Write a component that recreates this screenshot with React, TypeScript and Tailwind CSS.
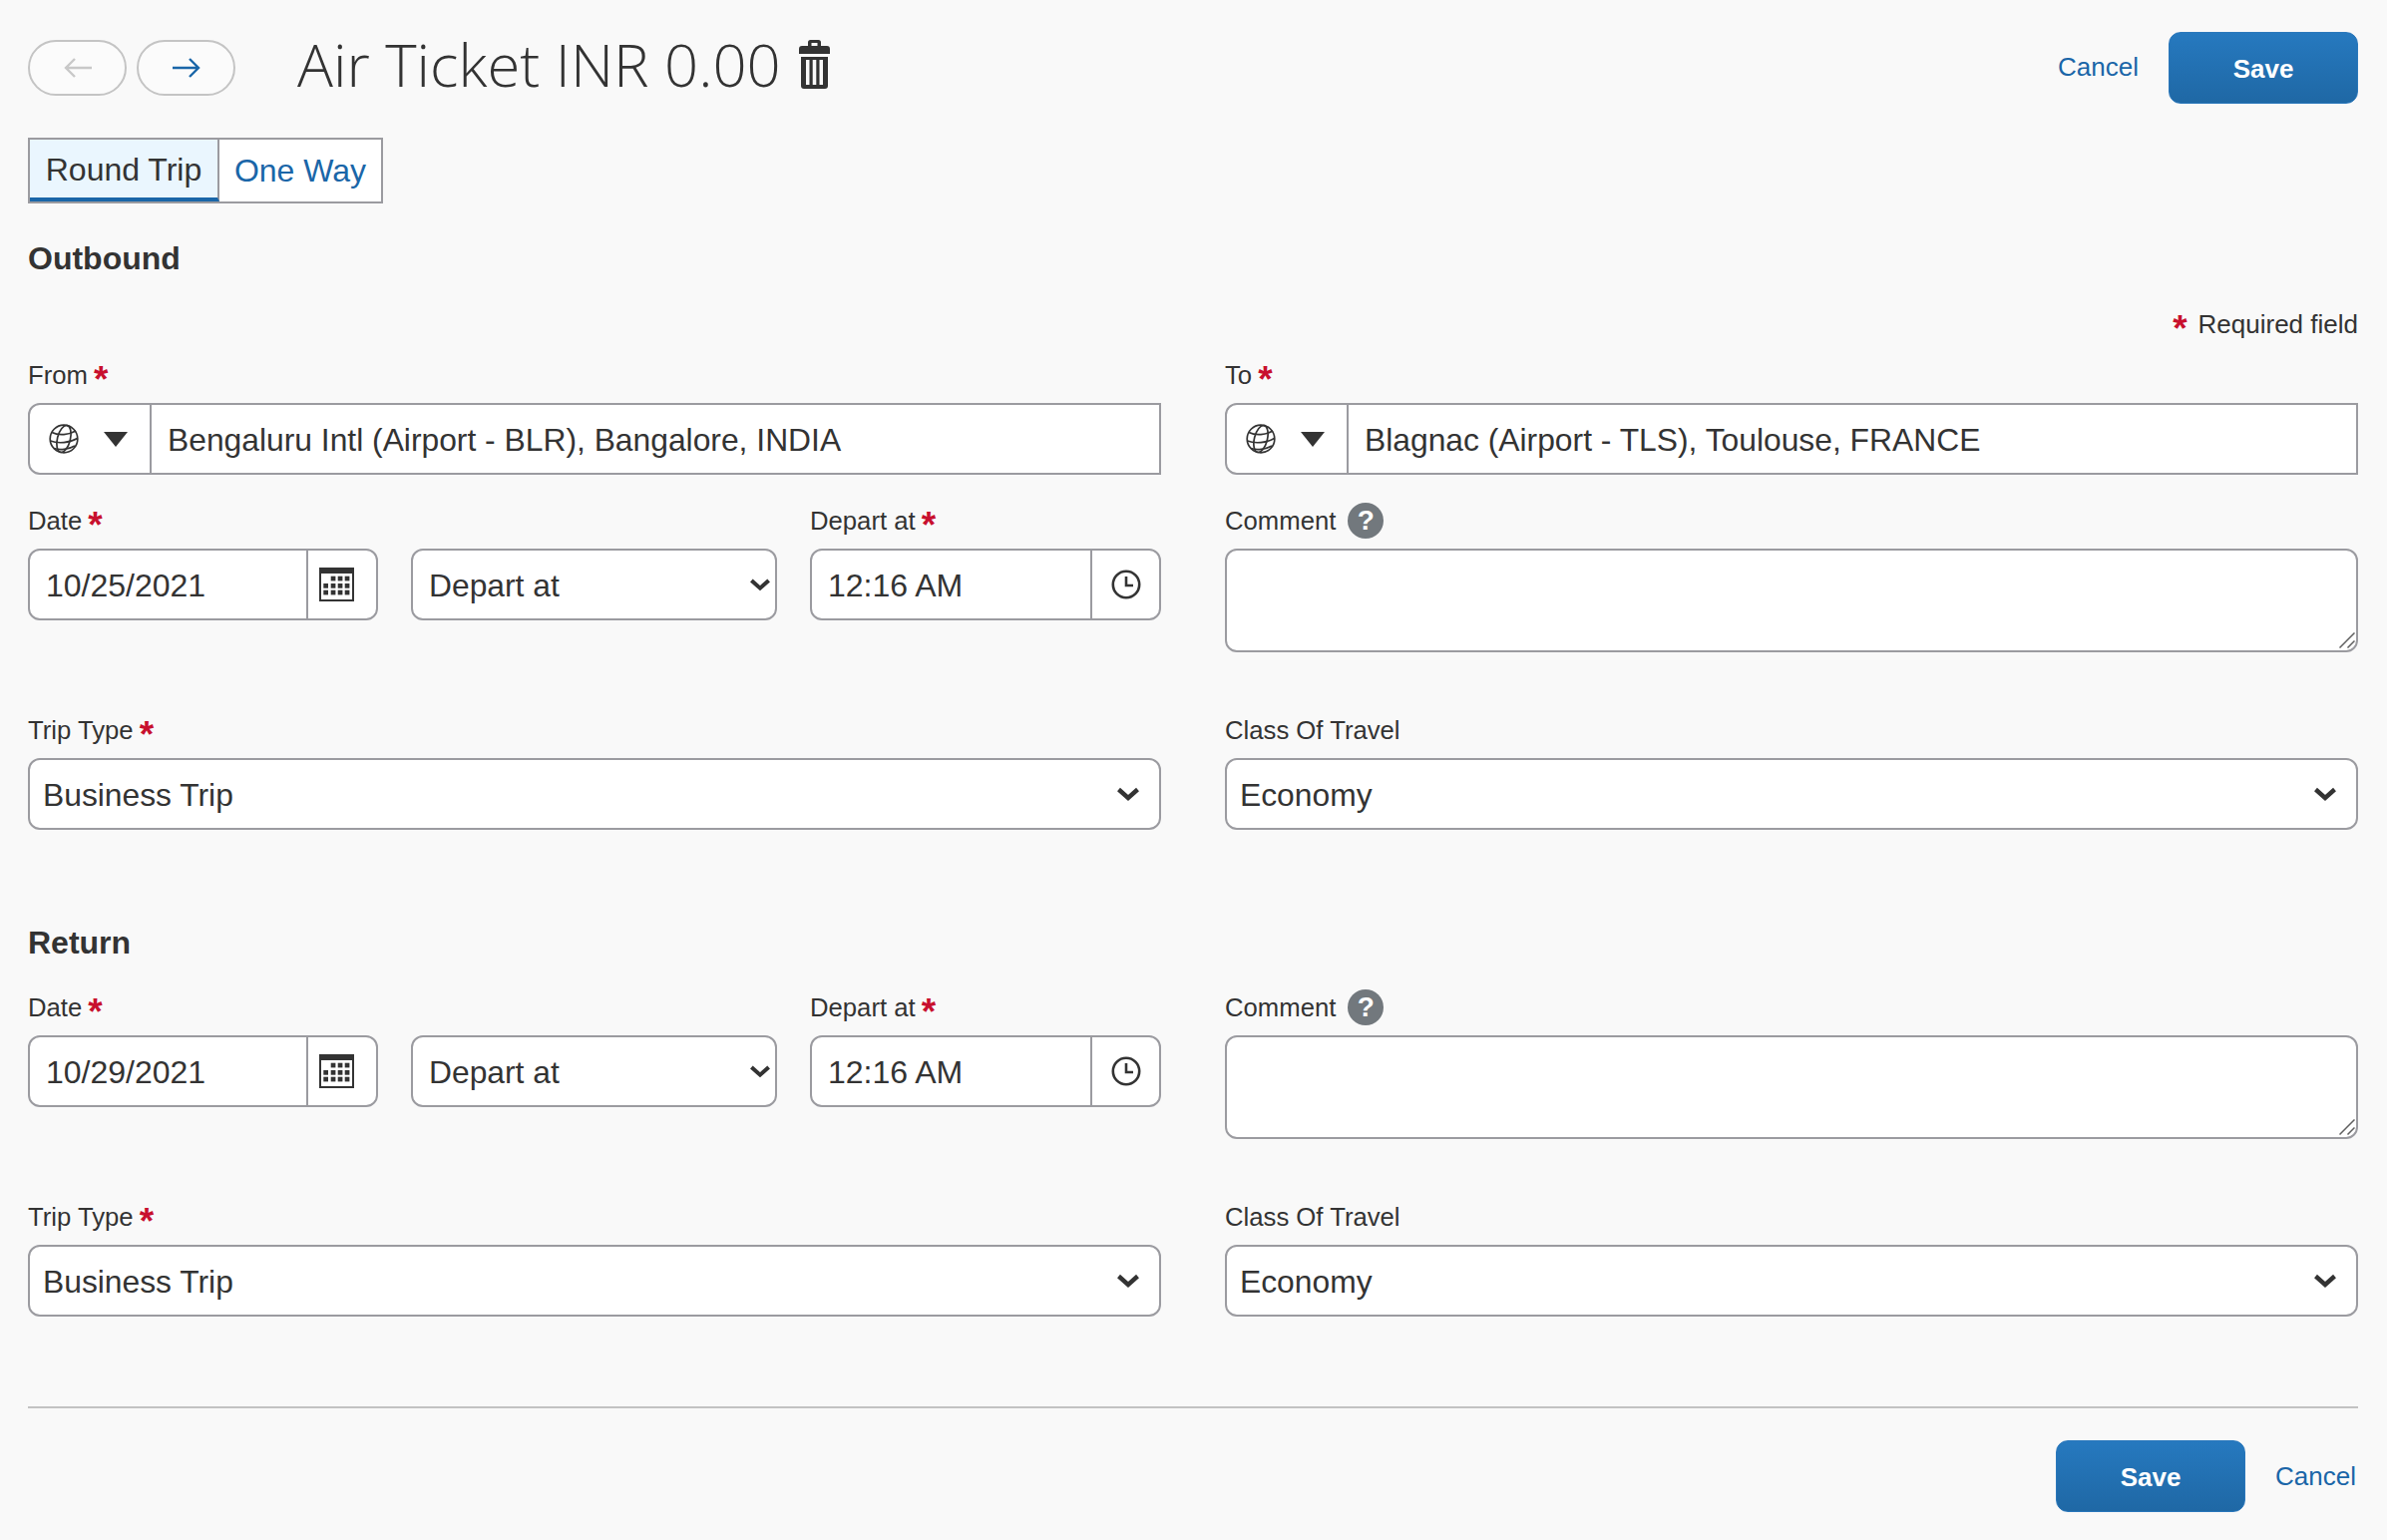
import * as React from 'react';

const FONT = "font-['Liberation_Sans',Arial,sans-serif]";
const BOX = 'border-2 border-[#9b9ba0] bg-white';

const Req = () => (
    <span className="ml-[6px] h-[32px] text-[37px] font-bold leading-[42px] text-[#c8102e]">*</span>
);

const Label: React.FC<{ text: string; required?: boolean; children?: React.ReactNode }> = ({ text, required, children }) => (
    <div className="mb-[12px] flex h-[32px] items-center whitespace-nowrap text-[25.700px] leading-[32px] text-[#333333]">
        <span>{text}</span>
        {required && <Req />}
        {children}
    </div>
);

const Chevron: React.FC<{ small?: boolean }> = ({ small }) => (
    <svg viewBox="0 0 22 14" className={small ? 'h-[13px] w-[20px]' : 'h-[14px] w-[22px]'} fill="none" stroke="#333333" strokeWidth="4.400">
        <path d="M1.500 2.500 L11 11 L20.500 2.500" />
    </svg>
);

const Globe = () => (
    <svg viewBox="0 0 30 30" className="h-[30px] w-[30px]" fill="none" stroke="#333333" strokeWidth="1.700">
        <circle cx="15" cy="15" r="13.800" />
        <ellipse cx="15" cy="15" rx="6.500" ry="13.800" transform="rotate(14 15 15)" />
        <path d="M3 8.500 C10 12 20 11 27 7 M1.500 17 C9 20 21 19 28.500 14.500 M5 24.500 C11 26.500 20 25.500 26 22" />
    </svg>
);

const Calendar = () => (
    <svg viewBox="0 0 35 34" className="mr-[11px] h-[34px] w-[35px]" fill="#333333">
        <path d="M0 0h35v34H0z M2 6v26h31V6z" fillRule="evenodd" />
        {[8.700, 16, 22.700].map(y =>
            [4.300, 11.700, 18.700, 25.700].map(x =>
                y === 8.700 && x < 11 ? null : <rect key={`${x}-${y}`} x={x} y={y} width="4.700" height="4.700" />
            )
        )}
    </svg>
);

const Clock = () => (
    <svg viewBox="0 0 30 30" className="h-[30px] w-[30px]" fill="none" stroke="#333333" strokeWidth="2.600">
        <circle cx="15" cy="15" r="13.200" />
        <path d="M15 7 V16 H22" />
    </svg>
);

const Trash = () => (
    <svg viewBox="0 0 31 49" className="ml-[18px] h-[49px] w-[31px]" fill="#333333">
        <path d="M9 6 V2.500 Q9 0 11.500 0 H19.500 Q22 0 22 2.500 V6 H28 Q31 6 31 9 V14 H0 V9 Q0 6 3 6 Z M12.500 6 H18.500 V3 H12.500 Z" fillRule="evenodd" />
        <path d="M2 17 H29 V46 Q29 49 26 49 H5 Q2 49 2 46 Z M7 20 V45 H10.500 V20 Z M13.700 20 V45 H17.300 V20 Z M20.500 20 V45 H24 V20 Z" fillRule="evenodd" />
    </svg>
);

const SaveButton = () => (
    <button className="h-[72px] w-[190px] rounded-[12px] border border-[#2a77bb] bg-gradient-to-b from-[#2679bf] to-[#1f68a5] pt-[2px] text-[26px] font-bold text-white">
        Save
    </button>
);

const CancelLink: React.FC<{ className?: string }> = ({ className }) => (
    <a className={`text-[26px] leading-[32px] text-[#1a66a8] ${className ?? ''}`}>Cancel</a>
);

const Location: React.FC<{ label: string; value: string }> = ({ label, value }) => (
    <div>
        <Label text={label} required />
        <div className="flex h-[72px]">
            <div className={`${BOX} flex w-[124px] shrink-0 items-center rounded-l-[12px] pl-[19px]`}>
                <Globe />
                <span className="ml-[25px] h-0 w-0 border-x-[12px] border-t-[15px] border-x-transparent border-t-[#333333]" />
            </div>
            <input
                readOnly
                value={value}
                className={`${BOX} ml-[-2px] min-w-0 flex-1 pl-[16px] pt-[4px] text-[31.800px] text-[#333333] outline-none`}
            />
        </div>
    </div>
);

const AddonInput: React.FC<{ value: string; width: string; inputWidth: string; children: React.ReactNode }> = ({ value, width, inputWidth, children }) => (
    <div className={`${BOX} ${width} flex h-[72px] rounded-[12px]`}>
        <input readOnly value={value} className={`${inputWidth} min-w-0 rounded-l-[12px] pl-[16px] pt-[2px] text-[32px] text-[#333333] outline-none`} />
        <div className="flex flex-1 items-center justify-center border-l-2 border-[#9b9ba0]">{children}</div>
    </div>
);

const Select: React.FC<{ value: string; small?: boolean; className: string; padding: string }> = ({ value, small, className, padding }) => (
    <div className={`relative ${className}`}>
        <select className={`${BOX} ${padding} h-[72px] w-full appearance-none rounded-[12px] pt-[4px] text-[31.800px] text-[#333333] outline-none`} defaultValue={value}>
            <option>{value}</option>
        </select>
        <div className={`pointer-events-none absolute top-1/2 flex -translate-y-1/2 ${small ? 'right-[7px]' : 'right-[22px]'}`}>
            <Chevron small={small} />
        </div>
    </div>
);

const Help = () => (
    <span className="ml-[12px] flex h-[36px] w-[36px] items-center justify-center rounded-full bg-[#72787d] text-[28px] font-bold leading-none text-white">?</span>
);

const DateRow: React.FC<{ date: string }> = ({ date }) => (
    <>
        <div className="flex gap-[33px]">
            <div>
                <Label text="Date" required />
                <AddonInput value={date} width="w-[351px]" inputWidth="w-[277px]"><Calendar /></AddonInput>
            </div>
            <div className="pt-[44px]">
                <Select value="Depart at" small className="w-[367px]" padding="pl-[16px]" />
            </div>
            <div>
                <Label text="Depart at" required />
                <AddonInput value="12:16 AM" width="w-[352px]" inputWidth="w-[279px]"><Clock /></AddonInput>
            </div>
        </div>
        <div>
            <Label text="Comment"><Help /></Label>
            <div className="relative">
                <textarea className={`${BOX} block h-[104px] w-full resize-none rounded-[12px] outline-none`} />
                {/* resize handle */}
                <svg viewBox="0 0 16 16" className="pointer-events-none absolute bottom-[4px] right-[3px] h-[16px] w-[16px]" fill="none" stroke="#5f5f5f" strokeWidth="1.500">
                    <path d="M0.500 15.500 L15.500 0.500 M8.500 15.500 L15.500 8.500" />
                </svg>
            </div>
        </div>
    </>
);

const TypeRow = () => (
    <>
        <div>
            <Label text="Trip Type" required />
            <Select value="Business Trip" className="w-full" padding="pl-[13px]" />
        </div>
        <div>
            <Label text="Class Of Travel" />
            <Select value="Economy" className="w-full" padding="pl-[13px]" />
        </div>
    </>
);

export default function App() {
    return (
        <div className={`${FONT} h-[1544px] overflow-hidden bg-[#f9f9f9] pl-[28px] pr-[29px] text-[#333333]`}>
            <header className="flex h-[138px] items-start">
                <div className="mt-[40px] flex gap-[10px]">
                    <button className="flex h-[56px] w-[99px] items-center justify-center rounded-[28px] border-2 border-[#c4c4c4] bg-[#fbfbfb]">
                        <svg viewBox="0 0 28 20" className="h-[20px] w-[28px]" fill="none" stroke="#c8c8c8" strokeWidth="2.400"><path d="M28 10 H2 M11 1 L2 10 L11 19" /></svg>
                    </button>
                    <button className="flex h-[56px] w-[99px] items-center justify-center rounded-[28px] border-2 border-[#c4c4c4] bg-[#fbfbfb]">
                        <svg viewBox="0 0 28 20" className="h-[20px] w-[28px]" fill="none" stroke="#1a66a8" strokeWidth="2.400"><path d="M0 10 H26 M17 1 L26 10 L17 19" /></svg>
                    </button>
                </div>
                <div className="ml-[62px] mt-[24px] flex items-center">
                    <h1 className="font-['Open_Sans',sans-serif] text-[59.800px] font-light leading-[80px] text-[#333333]">Air Ticket INR 0.00</h1>
                    <Trash />
                </div>
                <div className="ml-auto mt-[32px] flex items-center gap-[30px]">
                    <CancelLink className="mb-[2px]" />
                    <SaveButton />
                </div>
            </header>

            <div className="flex h-[66px] w-[356px] border-2 border-[#9b9ba0] bg-white text-[32px]">
                <div className="flex w-[190px] items-center justify-center border-r-2 border-b-[4px] border-r-[#9b9ba0] border-b-[#1a66a8] bg-[#eaf6fe] pt-[2px] text-[#333333]">Round Trip</div>
                <div className="flex flex-1 items-center justify-center text-[#1a66a8]">One Way</div>
            </div>

            <h2 className="mt-[35px] h-[40px] text-[32px] font-bold leading-[40px]">Outbound</h2>

            <div className="mt-[30px] flex h-[32px] items-center justify-end text-[26px]">
                <span className="mr-[11px] h-[32px] text-[37px] font-bold leading-[42px] text-[#c8102e]">*</span>
                Required field
            </div>

            <div className="mt-[19px] grid grid-cols-2 gap-x-[64px]">
                <Location label="From" value="Bengaluru Intl (Airport - BLR), Bangalore, INDIA" />
                <Location label="To" value="Blagnac (Airport - TLS), Toulouse, FRANCE" />
            </div>
            <div className="mt-[30px] grid grid-cols-2 gap-x-[64px]">
                <DateRow date="10/25/2021" />
            </div>
            <div className="mt-[62px] grid grid-cols-2 gap-x-[64px]">
                <TypeRow />
            </div>

            <h2 className="mt-[93px] h-[40px] text-[32px] font-bold leading-[40px]">Return</h2>

            <div className="mt-[29px] grid grid-cols-2 gap-x-[64px]">
                <DateRow date="10/29/2021" />
            </div>
            <div className="mt-[62px] grid grid-cols-2 gap-x-[64px]">
                <TypeRow />
            </div>

            <hr className="mt-[90px] border-t-[2px] border-[#c2c2c2]" />

            <div className="mt-[32px] flex items-center justify-end gap-[30px] pr-[2px]">
                <SaveButton />
                <CancelLink />
            </div>
        </div>
    );
}
